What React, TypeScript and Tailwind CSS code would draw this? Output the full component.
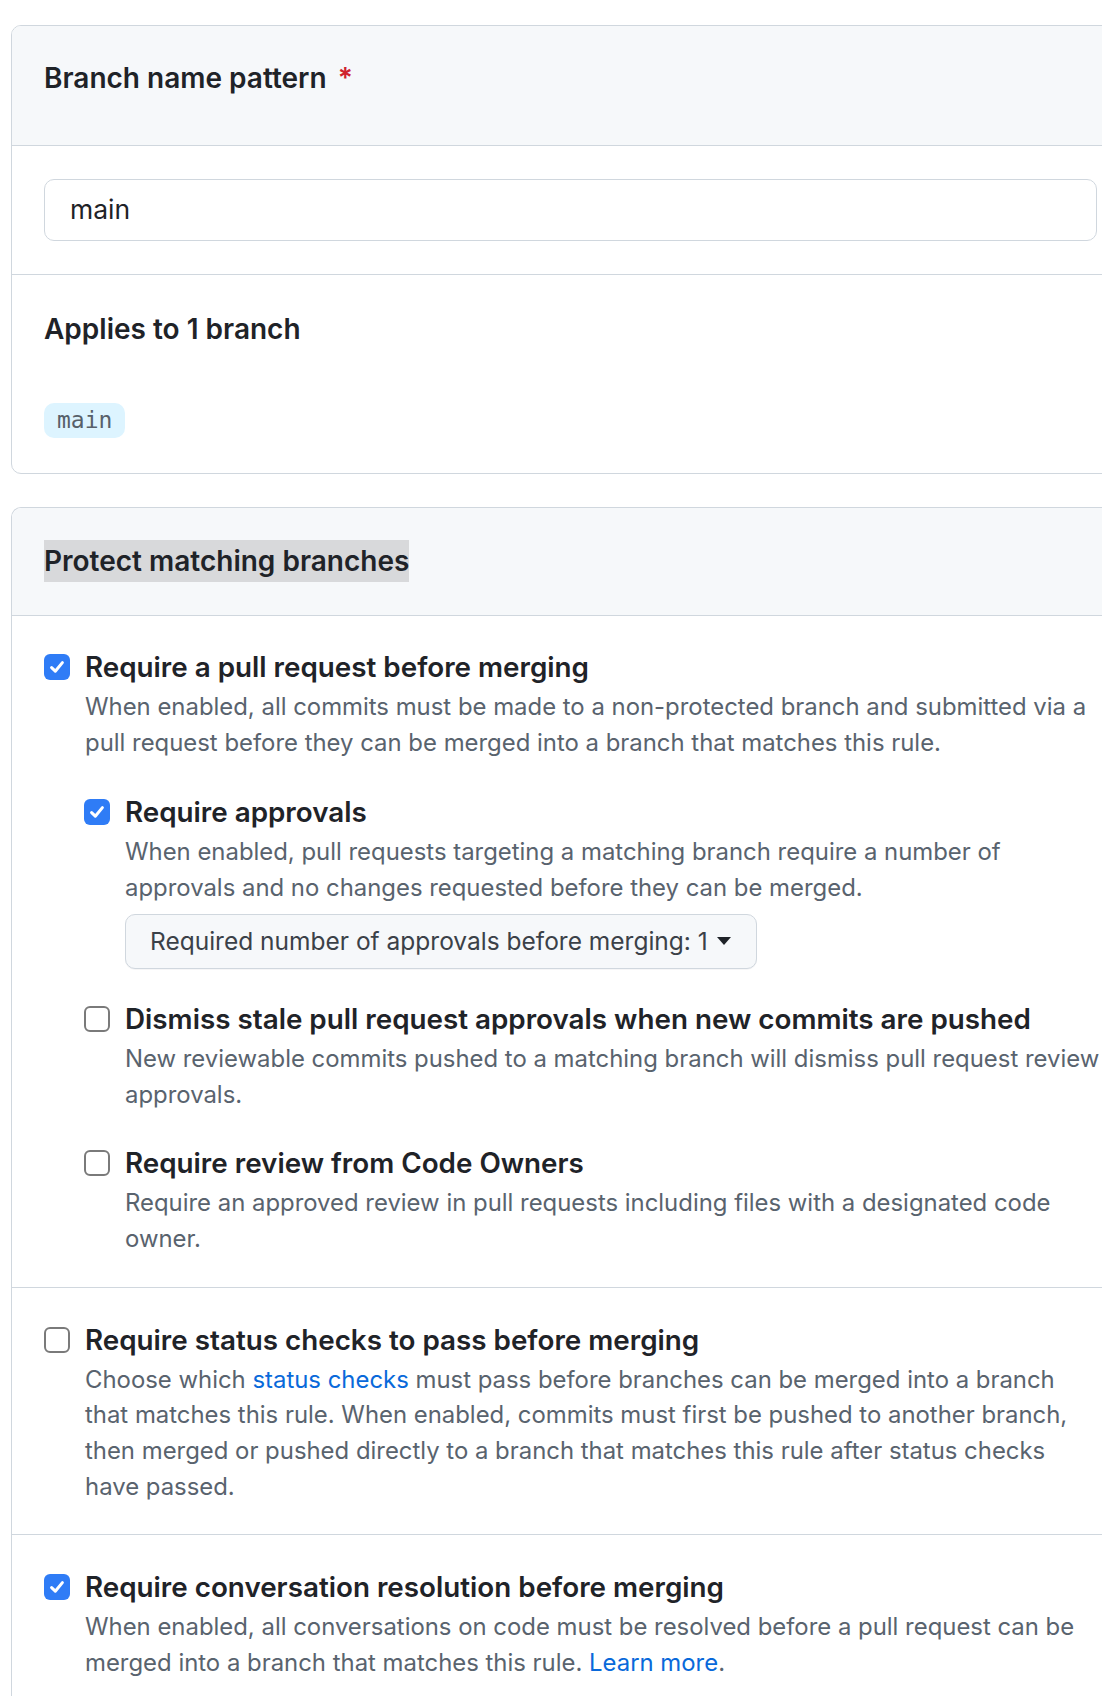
import React from "react";

function Check({ checked }: { checked: boolean }) {
  if (checked) {
    return (
      <span className="mt-[7px] flex h-[26px] w-[26px] shrink-0 items-center justify-center rounded-[6px] bg-[#2f7cf6]">
        <svg width="18" height="18" viewBox="0 0 18 18" fill="none">
          <path d="M3.6 9.6 L7.3 13.2 L14.4 4.6" stroke="white" strokeWidth="3" strokeLinecap="round" strokeLinejoin="round" />
        </svg>
      </span>
    );
  }
  return <span className="mt-[7px] h-[26px] w-[26px] shrink-0 rounded-[6px] border-2 border-[#7a7a7a] bg-white" />;
}

function Item({
  checked,
  title,
  children,
  extra,
}: {
  checked: boolean;
  title: string;
  children: React.ReactNode;
  extra?: React.ReactNode;
}) {
  return (
    <div className="flex gap-[15px]">
      <Check checked={checked} />
      <div className="min-w-0 flex-1">
        <div className="whitespace-nowrap text-[27.8px] font-semibold leading-[40px] text-[#1f2328]">{title}</div>
        <div className="mt-[2px] whitespace-nowrap text-[23.9px] leading-[35.7px] text-[#59636e]">{children}</div>
        {extra}
      </div>
    </div>
  );
}

export default function App() {
  return (
    <div
      className="h-[1696px] w-[1102px] overflow-hidden bg-white"
      style={{ fontFamily: "Inter, 'Noto Sans', sans-serif" }}
    >
      <div className="pl-[11px] pt-[25px]">
        {/* Box 1 */}
        <div className="w-[1119px] overflow-hidden rounded-[10px] border border-[#d0d7de]">
          <div className="border-b border-[#d0d7de] bg-[#f6f8fa] px-[32px] pb-[49px] pt-[35px]">
            <div className="text-[28px] font-semibold leading-[35px] text-[#1f2328]">
              Branch name pattern <span className="ml-[4px] text-[#cf222e]">*</span>
            </div>
          </div>
          <div className="border-b border-[#d0d7de] px-[32px] py-[33px]">
            <div className="flex h-[62px] items-center rounded-[10px] border border-[#d0d7de] bg-white pl-[25px] text-[26.5px] text-[#1f2328]">
              main
            </div>
          </div>
          <div className="px-[32px] pb-[35px] pt-[37px]">
            <div className="text-[28px] font-semibold leading-[35px] text-[#1f2328]">Applies to 1 branch</div>
            <div className="mt-[56px] flex">
              <span
                className="flex h-[35px] items-center rounded-[10px] bg-[#ddf4ff] px-[13px] text-[23px] text-[#57606a]"
                style={{ fontFamily: "'DejaVu Sans Mono', 'Liberation Mono', monospace" }}
              >
                main
              </span>
            </div>
          </div>
        </div>

        {/* Box 2 */}
        <div className="mt-[33px] w-[1119px] rounded-t-[10px] border border-b-0 border-[#d0d7de]">
          <div className="rounded-t-[10px] border-b border-[#d0d7de] bg-[#f6f8fa] px-[32px] pb-[33px] pt-[32px]">
            <span className="inline-block bg-[#d8d9db] text-[28px] font-semibold leading-[42px] text-[#1f2328]">
              Protect matching branches
            </span>
          </div>

          <div className="border-b border-[#d0d7de] px-[32px] pb-[30px] pt-[31px]">
            <Item
              checked
              title="Require a pull request before merging"
              extra={
                <div className="-ml-[1px] mt-[32px] flex flex-col">
                  <Item
                    checked
                    title="Require approvals"
                    extra={
                      <div className="mt-[8px] flex">
                        <div className="flex h-[55px] items-center gap-[8px] rounded-[10px] border border-[#d0d7de] bg-[#f6f8fa] pl-[24px] pr-[24px] text-[24.5px] text-[#3b4148] shadow-[0_1px_0_rgba(31,35,40,0.04)]">
                          <span>Required number of approvals before merging: 1</span>
                          <svg width="16" height="10" viewBox="0 0 16 10">
                            <path d="M1 1 L15 1 L8 9 Z" fill="#1f2328" />
                          </svg>
                        </div>
                      </div>
                    }
                  >
                    When enabled, pull requests targeting a matching branch require a number of
                    <br />
                    approvals and no changes requested before they can be merged.
                  </Item>
                  <div className="mt-[30px]">
                    <Item checked={false} title="Dismiss stale pull request approvals when new commits are pushed">
                      New reviewable commits pushed to a matching branch will dismiss pull request review
                      <br />
                      approvals.
                    </Item>
                  </div>
                  <div className="mt-[31px]">
                    <Item checked={false} title="Require review from Code Owners">
                      Require an approved review in pull requests including files with a designated code
                      <br />
                      owner.
                    </Item>
                  </div>
                </div>
              }
            >
              When enabled, all commits must be made to a non-protected branch and submitted via a
              <br />
              pull request before they can be merged into a branch that matches this rule.
            </Item>
          </div>

          <div className="border-b border-[#d0d7de] px-[32px] pb-[30px] pt-[32px]">
            <Item checked={false} title="Require status checks to pass before merging">
              Choose which <span className="text-[#0969da]">status checks</span> must pass before branches can be
              merged into a branch
              <br />
              that matches this rule. When enabled, commits must first be pushed to another branch,
              <br />
              then merged or pushed directly to a branch that matches this rule after status checks
              <br />
              have passed.
            </Item>
          </div>

          <div className="px-[32px] pb-[30px] pt-[32px]">
            <Item checked title="Require conversation resolution before merging">
              When enabled, all conversations on code must be resolved before a pull request can be
              <br />
              merged into a branch that matches this rule. <span className="text-[#0969da]">Learn more</span>.
            </Item>
          </div>
        </div>
      </div>
    </div>
  );
}
